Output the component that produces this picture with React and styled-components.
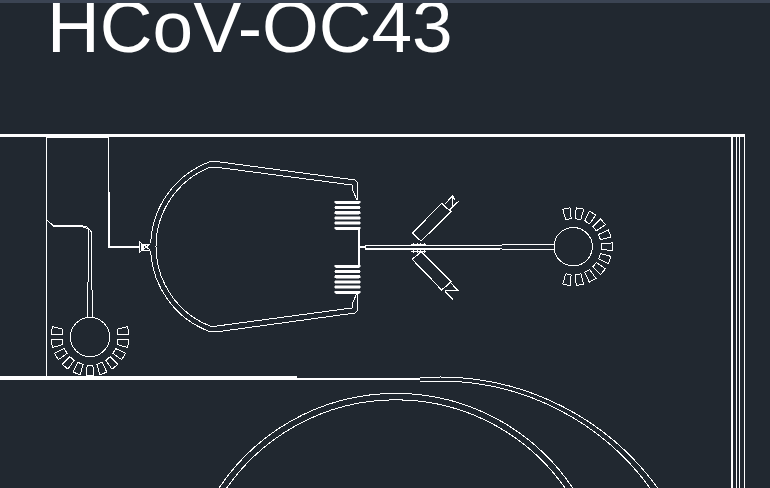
import React from 'react';
import styled, { createGlobalStyle } from 'styled-components';

const GlobalStyle = createGlobalStyle`
  html, body {
    margin: 0;
    padding: 0;
    background: #212830;
  }
`;

const PAD_ANGLES = [-100, -80, -60, -40, -20, 0, 20, 40, 60, 80, 100];
const COIL_TURNS = [0, 1, 2, 3, 4, 5];

const PadRing = ({cx, cy, r, turn = 0}) => (
  <>
    <circle cx={cx} cy={cy} r={r} />
    {PAD_ANGLES.map((a) => (
      <polygon
        key={a}
        points="28,-2.8 38.8,-3.8 38.8,3.8 28,2.8"
        transform={`translate(${cx} ${cy}) rotate(${a + turn})`}
      />
    ))}
  </>
);

const Coil = ({top}) => (
  <>
    {COIL_TURNS.map((n) => (
      <Winding key={n} x={334.5} y={top + n * 5.2} width={26} height={2.6} rx={1.3} />
    ))}
  </>
);

const App = () => {
  return (
    <Page>
      <GlobalStyle />
      <TopStrip />
      <Title>HCoV-OC43</Title>
      <Drawing viewBox="0 60 770 428">
        {/* outer frame */}
        <Heavy d="M0 135.5H745" $weight={3} />
        <Heavy d="M46 137H108M109 192V247H139" />
        <Heavy d="M0 378H297" $weight={4} />
        <Heavy d="M297 379H420" />
        <path d="M46.5 135V378M108.5 135V192" />
        <Heavy d="M731.5 137V488" />
        <path d="M736 136V488M739.5 136V488" />
        <Heavy d="M744.5 136V488" $weight={1.5} />

        {/* feed line to the lower left ring */}
        <path d="M47 220L53 225.5H81L87 227L88.5 230V248L87.5 318" />
        <path d="M53 226.5H81L89 229L91.5 232V260L92.5 318" />
        <PadRing cx={90} cy={337} r={19.6} turn={90} />

        {/* iris on the cavity */}
        <path d="M139.5 242V252.5L143 249.5V244.5ZM143 244H150M143 250H150M143 244L150 250M143 250L150 244M141 244V251M142 245V250" />

        {/* cavity walls */}
        <path d="M150.7 243A90.6 90.6 0 0 1 210 161.7H218L355 180L357 182V200" />
        <path d="M150.7 251A90.6 90.6 0 0 0 210 331.7H218L355 313L357 311V293" />
        <path d="M210 167.3A85.3 85.3 0 0 0 210 326H217L352 308L352.5 303L357 293M210 167.3H217L352 185L352.5 190L357 200" />

        <Coil top={201} />
        <Coil top={265} />
        <Heavy d="M359 229V265M359 247H365" />

        {/* beam line and ring on the right */}
        <path d="M365 245.5H500L504 244.5H553.5M365 245.5V249" />
        <Heavy d="M365 249H500" />
        <path d="M500 248.5L504 249.5H553.5" />
        <PadRing cx={573.2} cy={246.7} r={19.2} />

        {/* crossing ticks */}
        <path d="M411 244H426M411 251H426M413.5 242.5V245M417 242.5V245M420.5 242.5V245M424 242.5V245M413.5 250V252.5M417 250V252.5M420.5 250V252.5M424 250V252.5" />

        {/* angled prisms */}
        <Heavy d="M412.3 233L441.7 203.3L451 211.7L421 241ZM443.5 205L449.5 210.5" $weight={1.2} />
        <Heavy d="M445 204L452.7 196V206.7L459.3 200.7M449 210.7L452.7 206.7M452.7 196L455 200" $weight={1.2} />
        <Heavy d="M412.3 259.3L421 251.7L451 281.7L441.7 290ZM443.5 288.5L449.5 283" $weight={1.2} />
        <Heavy d="M445 290.7H458.3L450.7 282.7M445 291.7L453 299.3" $weight={1.2} />

        {/* storage arcs */}
        <path d="M420 377H440A268.6 268.6 0 0 1 657.7 488" />
        <path d="M420 381H440A259.6 259.6 0 0 1 650 488" />
        <path d="M219 488A212.6 212.6 0 0 1 572.7 488" />
        <path d="M226.7 488A206.3 206.3 0 0 1 565 488" />
      </Drawing>
    </Page>
  );
};

export default App;

const Page = styled.div`
  display: flex;
  flex-direction: column;
  width: 770px;
  height: 488px;
  overflow: hidden;
  background-color: #212830;
`;

const TopStrip = styled.div`
  flex: none;
  height: 3px;
  background-color: #3b4453;
`;

const Title = styled.h1`
  flex: none;
  height: 57px;
  margin: 0;
  padding-left: 47px;
  overflow: hidden;
  color: #ffffff;
  font-family: 'Liberation Sans', Arial, sans-serif;
  font-size: 73px;
  font-weight: 400;
  line-height: 47px;
`;

const Drawing = styled.svg`
  display: block;
  flex: none;
  width: 770px;
  height: 428px;
  fill: none;
  stroke: #ffffff;
  stroke-width: 1;
  shape-rendering: crispEdges;
`;

const Heavy = styled.path`
  stroke-width: ${(p) => p.$weight || 2};
`;

const Winding = styled.rect`
  fill: #ffffff;
  stroke-width: 0.5;
`;
